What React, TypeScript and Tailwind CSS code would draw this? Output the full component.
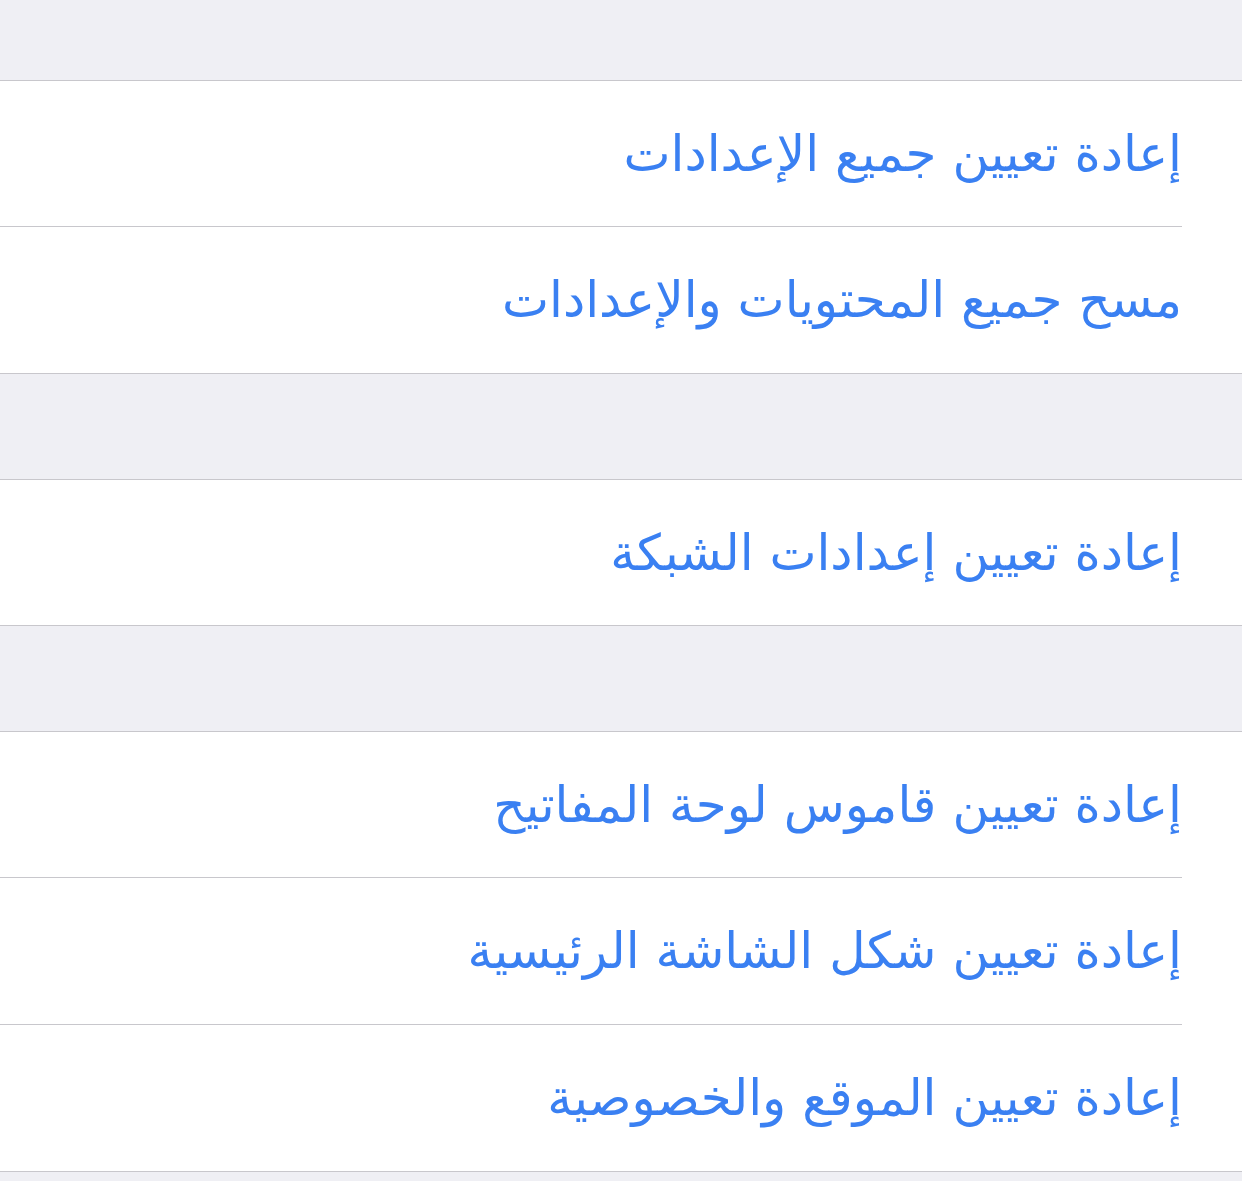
import React from 'react';

type Row = { label: string; h: string };

const groups: Row[][] = [
  [
    { label: 'إعادة تعيين جميع الإعدادات', h: 'h-[145px]' },
    { label: 'مسح جميع المحتويات والإعدادات', h: 'h-[146px]' },
  ],
  [{ label: 'إعادة تعيين إعدادات الشبكة', h: 'h-[145px]' }],
  [
    { label: 'إعادة تعيين قاموس لوحة المفاتيح', h: 'h-[145px]' },
    { label: 'إعادة تعيين شكل الشاشة الرئيسية', h: 'h-[146px]' },
    { label: 'إعادة تعيين الموقع والخصوصية', h: 'h-[146px]' },
  ],
];

function Group({ rows }: { rows: Row[] }) {
  return (
    <div className="bg-white border-y border-[#c8c7cc]">
      {rows.map((r, i) => (
        <div key={r.label}>
          <button
            className={`${r.h} w-full flex items-center pr-[60px] text-right text-[#3a80f2] text-[50px] leading-none cursor-pointer`}
            style={{ fontFamily: '"DejaVu Sans", "Noto Sans", sans-serif' }}
          >
            {r.label}
          </button>
          {i < rows.length - 1 && <div className="h-px bg-[#c8c7cc] mr-[60px]" />}
        </div>
      ))}
    </div>
  );
}

export default function App() {
  return (
    <div dir="rtl" className="min-h-[1181px] w-[1242px] bg-[#efeff4]">
      <div className="h-[80px]" />
      <Group rows={groups[0]} />
      <div className="h-[105px]" />
      <Group rows={groups[1]} />
      <div className="h-[105px]" />
      <Group rows={groups[2]} />
    </div>
  );
}
